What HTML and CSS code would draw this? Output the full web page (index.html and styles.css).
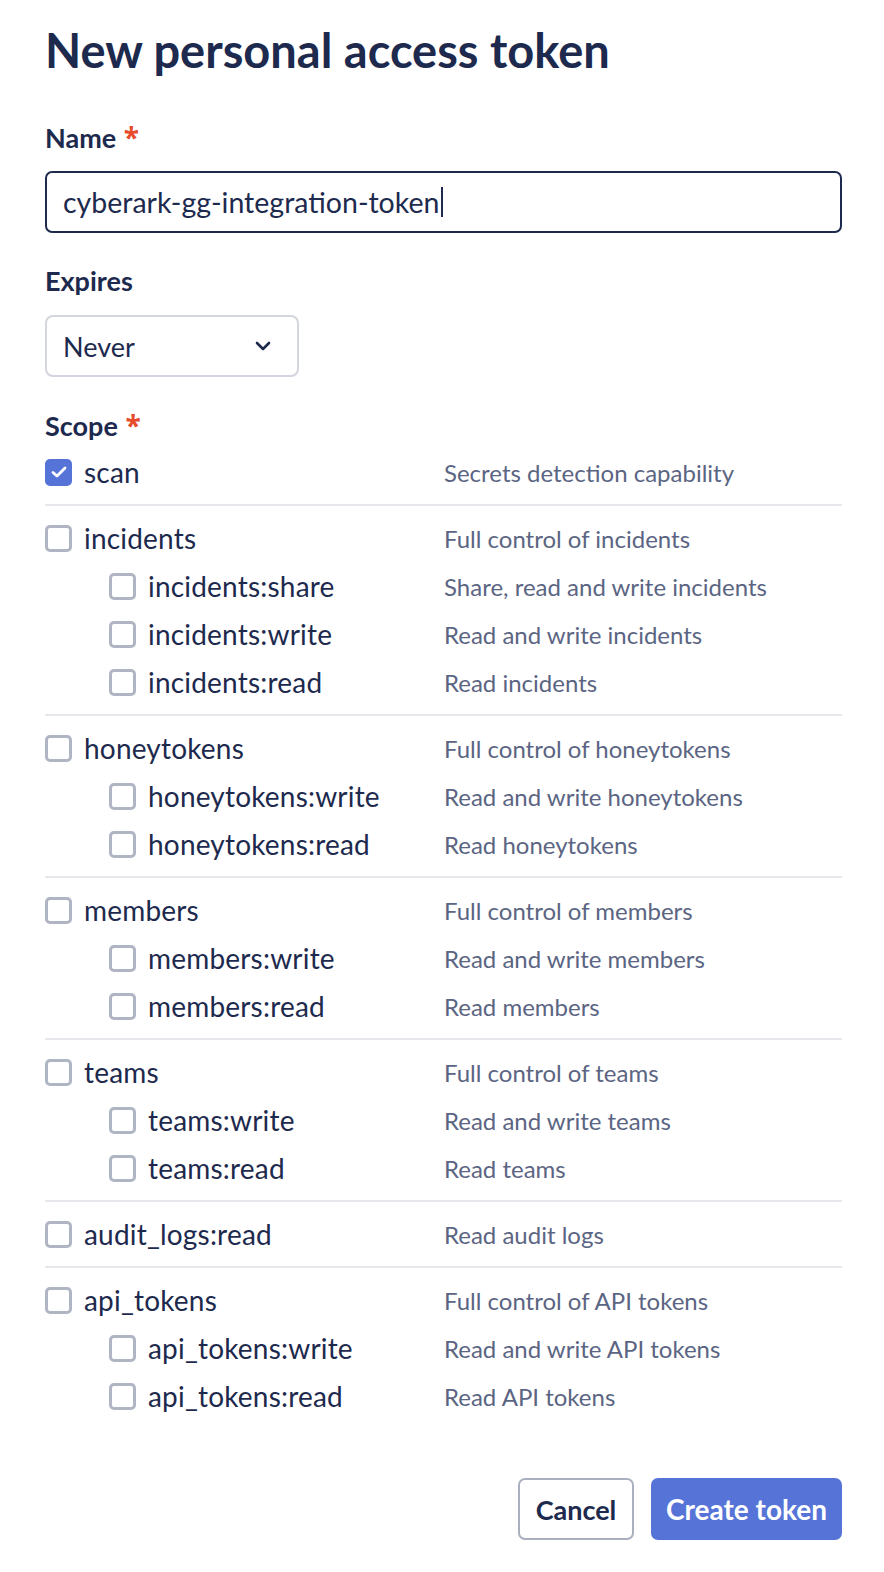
FILE: index.html
```html
<!DOCTYPE html>
<html>
<head>
<meta charset="utf-8">
<link rel="stylesheet" href="styles.css">
</head>
<body>
<div class="page">
  <h1 class="title">New personal access token</h1>

  <div class="field-label label-name">Name <span class="req">*</span></div>
  <div class="text-input"><span class="value">cyberark-gg-integration-token</span><span class="caret"></span></div>

  <div class="field-label label-expires">Expires</div>
  <div class="select">
    <span class="select-value">Never</span>
    <svg class="chevron" width="16" height="10" viewBox="0 0 16 10"><path d="M2 2 L8 8 L14 2" fill="none" stroke="#1d2a4e" stroke-width="2.6" stroke-linecap="round" stroke-linejoin="round"/></svg>
  </div>

  <div class="field-label label-scope">Scope <span class="req">*</span></div>

  <div class="scopes">
    <div class="group">
      <div class="row">
        <div class="opt"><span class="cb checked"><svg width="18" height="14" viewBox="0 0 18 14"><path d="M3 7.5 L7 11 L15 3" fill="none" stroke="#fff" stroke-width="2.8" stroke-linecap="round" stroke-linejoin="round"/></svg></span><span class="name">scan</span></div>
        <div class="desc">Secrets detection capability</div>
      </div>
    </div>
    <div class="group">
      <div class="row"><div class="opt"><span class="cb"></span><span class="name">incidents</span></div><div class="desc">Full control of incidents</div></div>
      <div class="row sub"><div class="opt"><span class="cb"></span><span class="name">incidents:share</span></div><div class="desc">Share, read and write incidents</div></div>
      <div class="row sub"><div class="opt"><span class="cb"></span><span class="name">incidents:write</span></div><div class="desc">Read and write incidents</div></div>
      <div class="row sub"><div class="opt"><span class="cb"></span><span class="name">incidents:read</span></div><div class="desc">Read incidents</div></div>
    </div>
    <div class="group">
      <div class="row"><div class="opt"><span class="cb"></span><span class="name">honeytokens</span></div><div class="desc">Full control of honeytokens</div></div>
      <div class="row sub"><div class="opt"><span class="cb"></span><span class="name">honeytokens:write</span></div><div class="desc">Read and write honeytokens</div></div>
      <div class="row sub"><div class="opt"><span class="cb"></span><span class="name">honeytokens:read</span></div><div class="desc">Read honeytokens</div></div>
    </div>
    <div class="group">
      <div class="row"><div class="opt"><span class="cb"></span><span class="name">members</span></div><div class="desc">Full control of members</div></div>
      <div class="row sub"><div class="opt"><span class="cb"></span><span class="name">members:write</span></div><div class="desc">Read and write members</div></div>
      <div class="row sub"><div class="opt"><span class="cb"></span><span class="name">members:read</span></div><div class="desc">Read members</div></div>
    </div>
    <div class="group">
      <div class="row"><div class="opt"><span class="cb"></span><span class="name">teams</span></div><div class="desc">Full control of teams</div></div>
      <div class="row sub"><div class="opt"><span class="cb"></span><span class="name">teams:write</span></div><div class="desc">Read and write teams</div></div>
      <div class="row sub"><div class="opt"><span class="cb"></span><span class="name">teams:read</span></div><div class="desc">Read teams</div></div>
    </div>
    <div class="group">
      <div class="row"><div class="opt"><span class="cb"></span><span class="name">audit_logs:read</span></div><div class="desc">Read audit logs</div></div>
    </div>
    <div class="group">
      <div class="row"><div class="opt"><span class="cb"></span><span class="name">api_tokens</span></div><div class="desc">Full control of API tokens</div></div>
      <div class="row sub"><div class="opt"><span class="cb"></span><span class="name">api_tokens:write</span></div><div class="desc">Read and write API tokens</div></div>
      <div class="row sub"><div class="opt"><span class="cb"></span><span class="name">api_tokens:read</span></div><div class="desc">Read API tokens</div></div>
    </div>
  </div>

  <div class="actions">
    <button class="btn btn-secondary">Cancel</button>
    <button class="btn btn-primary">Create token</button>
  </div>
</div>
</body>
</html>
```

FILE: styles.css
```css
* { box-sizing: border-box; }
html, body { margin: 0; padding: 0; background: #ffffff; }
body {
  font-family: "Lato", "Liberation Sans", sans-serif;
  color: #1d2a4e;
}
.page {
  padding: 22px 42px 0 45px;
}
.title {
  margin: 0;
  font-size: 47px;
  line-height: 56px;
  font-weight: 700;
  color: #1d2a4e;
}
.field-label {
  height: 36px;
  font-size: 27px;
  line-height: 36px;
  font-weight: 700;
  color: #1d2a4e;
}
.req {
  color: #e84a2c;
  font-family: "Open Sans", sans-serif;
  font-size: 28px;
  line-height: 0;
  margin-left: 1px;
}
.label-name { margin-top: 42px; }
.label-expires { margin-top: 30px; }
.label-scope { margin-top: 31px; }

.text-input {
  margin-top: 15px;
  height: 62px;
  border: 2px solid #1d2a4e;
  border-radius: 7px;
  padding: 0 16px;
  display: flex;
  align-items: center;
  font-size: 28.5px;
  color: #1d2a4e;
}
.caret {
  display: inline-block;
  width: 2px;
  height: 30px;
  background: #1d2a4e;
  margin-left: 2px;
}
.select {
  margin-top: 16px;
  width: 254px;
  height: 62px;
  border: 2px solid #d3d6de;
  border-radius: 8px;
  padding: 0 26px 0 16px;
  display: flex;
  align-items: center;
  justify-content: space-between;
  font-size: 27px;
}
.scopes { margin-top: 4px; }
.group {
  padding: 0 0 8px;
  border-bottom: 2px solid #e7e8ed;
  margin-bottom: 8px;
}
.group:last-child { border-bottom: none; padding-bottom: 0; margin-bottom: 0; }
.row {
  height: 48px;
  display: grid;
  grid-template-columns: 399px 1fr;
  align-items: center;
}
.opt { display: flex; align-items: center; }
.row.sub .opt { padding-left: 64px; }
.cb {
  width: 27px;
  height: 27px;
  border: 3px solid #b0b5c4;
  border-radius: 5px;
  margin-right: 12px;
  flex: none;
  display: flex;
  align-items: center;
  justify-content: center;
}
.cb.checked { background: #5674d8; border-color: #5674d8; }
.name { font-size: 28px; letter-spacing: 0.2px; color: #1d2a4e; }
.desc { font-size: 24px; color: #5b6583; }
.actions {
  margin-top: 58px;
  display: flex;
  justify-content: flex-end;
  gap: 17px;
}
.btn {
  height: 62px;
  border-radius: 7px;
  font-family: inherit;
  font-size: 28px;
  font-weight: 700;
  cursor: pointer;
}
.btn-secondary {
  width: 116px;
  background: #fff;
  border: 2px solid #aab0c0;
  color: #1d2a4e;
  font-size: 27px;
}
.btn-primary {
  width: 191px;
  background: #5674d8;
  border: none;
  color: #fff;
}
```
